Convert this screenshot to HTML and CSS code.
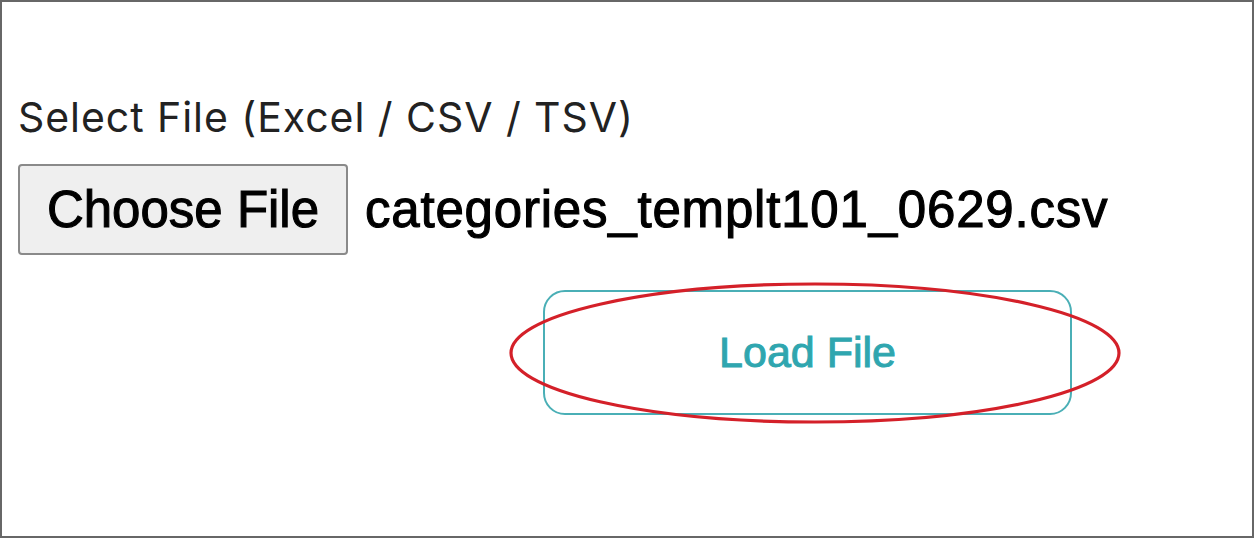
FILE: index.html
```html
<!DOCTYPE html>
<html>
<head>
<meta charset="utf-8">
<link rel="stylesheet" href="styles.css">
</head>
<body>
<div class="frame">
  <div class="label">Select File (Excel / CSV / TSV)</div>
  <div class="file-row">
    <button class="choose">Choose File</button>
    <span class="filename">categories_templt101_0629.csv</span>
  </div>
  <div class="load-row">
    <div class="load-wrap">
      <button class="load">Load File</button>
      <svg class="mark" width="614" height="146" viewBox="0 0 614 146">
        <ellipse cx="307" cy="73" rx="304" ry="69" fill="none" stroke="#d42029" stroke-width="3.2"/>
      </svg>
    </div>
  </div>
</div>
</body>
</html>
```

FILE: styles.css
```css
html, body {
  margin: 0;
  padding: 0;
  background: #fff;
}
.frame {
  width: 1254px;
  height: 538px;
  box-sizing: border-box;
  border: 2px solid #676767;
  padding: 90px 0 0 16px;
  display: flex;
  flex-direction: column;
}
.label {
  font-family: Inter, "Open Sans", sans-serif;
  font-size: 41px;
  line-height: 50px;
  color: #222;
  height: 50px;
  letter-spacing: 0.95px;
}
.file-row {
  display: flex;
  align-items: center;
  gap: 17px;
  margin-top: 22px;
}
.choose {
  width: 330px;
  height: 91px;
  box-sizing: border-box;
  border: 2px solid #8a8a8a;
  border-radius: 4px;
  background: #efefef;
  font-family: "Liberation Sans", Arial, sans-serif;
  font-size: 51px;
  color: #000;
  padding: 0;
  -webkit-text-stroke: 1.1px #000;
}
.filename {
  font-family: "Liberation Sans", Arial, sans-serif;
  font-size: 51px;
  letter-spacing: 0.8px;
  color: #000;
  -webkit-text-stroke: 1.1px #000;
}
.load-row {
  display: flex;
  margin-top: 35px;
  padding-left: 525px;
}
.load-wrap {
  position: relative;
}
.load {
  width: 529px;
  height: 125px;
  box-sizing: border-box;
  border: 2px solid #4aafb6;
  border-radius: 22px;
  background: #fff;
  font-family: "Liberation Sans", Arial, sans-serif;
  font-size: 43px;
  color: #2fa6af;
  -webkit-text-stroke: 1px #2fa6af;
  padding: 0;
  display: block;
}
.mark {
  position: absolute;
  left: -35px;
  top: -10px;
  pointer-events: none;
}
```
